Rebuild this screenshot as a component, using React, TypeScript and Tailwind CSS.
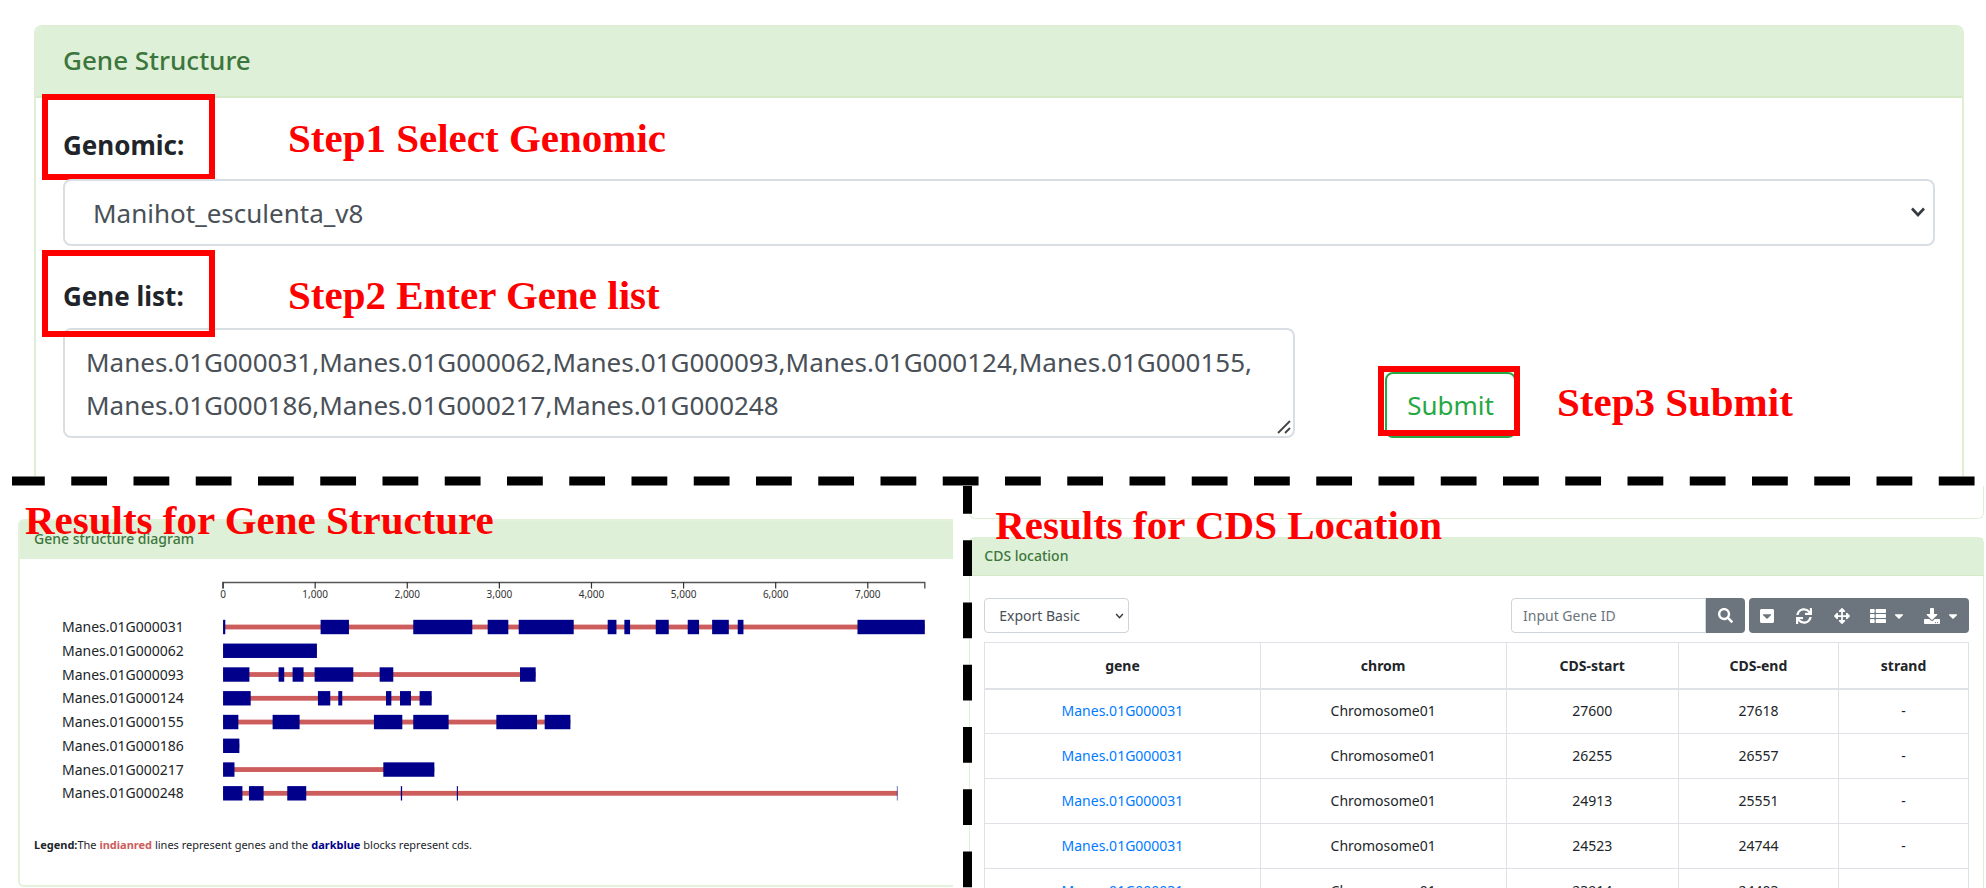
import { FaSearch, FaCaretSquareDown, FaSync, FaArrowsAlt, FaThList, FaDownload, FaCaretDown } from "react-icons/fa";

type Span = [number, number];

const genes: { id: string; cds: Span[] }[] = [
  {
    id: "Manes.01G000031",
    cds: [[0, 24], [1059, 1367], [2065, 2706], [2873, 3097], [3210, 3807], [4176, 4271], [4357, 4419], [4698, 4839], [5045, 5168], [5310, 5491], [5588, 5650], [6888, 7619]],
  },
  { id: "Manes.01G000062", cds: [[0, 1019]] },
  { id: "Manes.01G000093", cds: [[0, 286], [603, 664], [755, 874], [994, 1414], [1700, 1848], [3224, 3394]] },
  { id: "Manes.01G000124", cds: [[0, 300], [1030, 1164], [1251, 1294], [1769, 1827], [1921, 2040], [2134, 2265]] },
  { id: "Manes.01G000155", cds: [[0, 166], [538, 831], [1638, 1946], [2065, 2449], [2967, 3409], [3492, 3771]] },
  { id: "Manes.01G000186", cds: [[0, 177]] },
  { id: "Manes.01G000217", cds: [[0, 124], [1740, 2294]] },
  { id: "Manes.01G000248", cds: [[0, 210], [281, 440], [697, 903], [1930, 1944], [2538, 2550], [7316, 7322]] },
];

const cdsRows = [
  { gene: "Manes.01G000031", chrom: "Chromosome01", start: 27600, end: 27618, strand: "-" },
  { gene: "Manes.01G000031", chrom: "Chromosome01", start: 26255, end: 26557, strand: "-" },
  { gene: "Manes.01G000031", chrom: "Chromosome01", start: 24913, end: 25551, strand: "-" },
  { gene: "Manes.01G000031", chrom: "Chromosome01", start: 24523, end: 24744, strand: "-" },
  { gene: "Manes.01G000031", chrom: "Chromosome01", start: 23914, end: 24403, strand: "-" },
];

const AXIS_LEFT = 189;
const toX = (bp: number) => AXIS_LEFT + bp * 0.09208;

function Note({ className, children }: { className: string; children: string }) {
  return (
    <p className={`pointer-events-none absolute whitespace-nowrap font-['Liberation_Serif',serif] text-[41px] leading-[48px] font-bold text-[#ff0000] ${className}`}>
      {children}
    </p>
  );
}

function Frame({ className }: { className: string }) {
  return <span aria-hidden="true" className={`pointer-events-none absolute border-6 border-[#ff0000] ${className}`} />;
}

function Chevron({ className }: { className: string }) {
  return (
    <svg aria-hidden="true" viewBox="0 0 16 10" className={`pointer-events-none absolute ${className}`}>
      <path d="M2 1.5 L8 8 L14 1.5" fill="none" stroke="#343a40" strokeWidth="2.6" />
    </svg>
  );
}

function GeneChart() {
  return (
    <svg viewBox="0 0 919 240" className="block w-full font-['Noto_Sans',sans-serif]" role="img" aria-label="Gene structure diagram">
      <path d={`M${AXIS_LEFT} 13.5 V7.5 H${toX(7619)} V13.5`} fill="none" stroke="#55565a" strokeWidth="1.4" />
      {[0, 1000, 2000, 3000, 4000, 5000, 6000, 7000].map((tick) => (
        <g key={tick}>
          <path d={`M${toX(tick)} 7 V13.5`} stroke="#333" strokeWidth="1.2" />
          <text x={toX(tick)} y={23} textAnchor="middle" fontSize="10" fill="#333">
            {tick.toLocaleString("en-US")}
          </text>
        </g>
      ))}
      {genes.map((gene, row) => {
        const y = 52 + row * 23.75;
        return (
          <g key={gene.id}>
            <text x="28" y={y + 5} fontSize="14" fill="#212529">
              {gene.id}
            </text>
            <rect x={toX(0)} y={y - 2.4} width={toX(gene.cds[gene.cds.length - 1][1]) - toX(0)} height="4.8" fill="indianred" />
            {gene.cds.map(([start, end]) => (
              <rect key={start} x={toX(start)} y={y - 7.2} width={toX(end) - toX(start)} height="14.4" fill="darkblue" />
            ))}
          </g>
        );
      })}
    </svg>
  );
}

function ToolButton({ label, className, children }: { label: string; className: string; children: React.ReactNode }) {
  return (
    <button type="button" aria-label={label} className={`flex h-full items-center justify-center gap-[6px] ${className}`}>
      {children}
    </button>
  );
}

export default function App() {
  return (
    <main className="flex h-screen flex-col overflow-hidden bg-white font-['Noto_Sans',sans-serif] text-[#212529]">
      <section className="relative shrink-0 pt-[25px] pr-[22px] pl-[34px]">
        <div className="rounded-t-lg border-2 border-b-0 border-[#dfefd6]">
          <h2 className="rounded-t-md border-b-2 border-[#d6e9c6] bg-[#dff0d8] px-[27px] pt-[11px] pb-[14px] text-[26px] leading-[44px] font-medium text-[#3c763d]">
            Gene Structure
          </h2>
          <form className="px-[27px]" onSubmit={(e) => e.preventDefault()}>
            <div className="relative pt-[25px]">
              <label htmlFor="genomic" className="block pb-[12px] text-[26px] leading-[44px] font-bold">
                Genomic:
              </label>
              <Frame className="top-[-4px] left-[-21px] h-[86px] w-[173px]" />
              <Note className="top-[16px] left-[225px]">Step1 Select Genomic</Note>
            </div>
            <div className="relative">
              <select id="genomic" className="block h-[67px] w-full appearance-none rounded-lg border-2 border-[#d8dee4] bg-white pt-[2px] pl-7 text-[26px] text-[#495057]">
                <option>Manihot_esculenta_v8</option>
              </select>
              <Chevron className="top-[28px] right-[9px] h-[10px] w-[16px]" />
            </div>
            <div className="relative pt-[28px]">
              <label htmlFor="genes" className="block pb-[10px] text-[26px] leading-[44px] font-bold">
                Gene list:
              </label>
              <Frame className="top-[4px] left-[-21px] z-10 h-[87px] w-[173px]" />
              <Note className="top-[25px] left-[225px]">Step2 Enter Gene list</Note>
            </div>
            <div className="flex items-end pb-[38px]">
              <div className="relative w-[1232px]">
                <textarea
                  id="genes"
                  rows={2}
                  className="block h-[110px] w-full resize-none overflow-hidden rounded-lg border-2 border-[#d8dee4] py-[11px] pl-[21px] text-[26px] leading-[43px] text-[#495057]"
                  defaultValue={"Manes.01G000031,Manes.01G000062,Manes.01G000093,Manes.01G000124,Manes.01G000155,\nManes.01G000186,Manes.01G000217,Manes.01G000248"}
                />
                <svg aria-hidden="true" viewBox="0 0 14 14" className="pointer-events-none absolute right-[4px] bottom-[4px] h-[14px] w-[14px]">
                  <path d="M1 13 L13 1 M8 13 L13 8" stroke="#444" strokeWidth="1.8" />
                </svg>
              </div>
              <div className="relative ml-[90px]">
                <button type="submit" className="block h-[66px] w-[131px] rounded-lg border-2 border-[#28a745] bg-white text-[26px] text-[#28a745]">
                  Submit
                </button>
                <Frame className="top-[-6px] left-[-7px] h-[70px] w-[142px]" />
                <Note className="top-[6px] left-[172px]">Step3 Submit</Note>
              </div>
            </div>
          </form>
        </div>
      </section>

      <svg aria-hidden="true" className="block h-[10px] w-full shrink-0">
        <line x1="12" y1="5" x2="99.5%" y2="5" stroke="#000" strokeWidth="9" strokeDasharray="35.8 26.45" strokeDashoffset="3" />
      </svg>

      <div className="flex min-h-0 flex-1">
        <section className="relative w-[48%] shrink-0 pt-[33px] pl-[18px]">
          <div className="rounded-l-md border-2 border-r-0 border-[#e4f2dc]">
            <h2 className="border-b border-[#dff0d8] bg-[#dff0d8] px-[14px] pt-[6px] pb-[7px] text-[14px] leading-[24px] font-medium text-[#3c763d]">
              Gene structure diagram
            </h2>
            <div className="pt-[16px] pl-[14px]">
              <GeneChart />
              <p className="pt-[20px] pb-[30px] text-[11px] leading-[20px]">
                <b>Legend:</b>The <b className="text-[indianred]">indianred</b> lines represent genes and the <b className="text-[darkblue]">darkblue</b> blocks represent cds.
              </p>
            </div>
          </div>
          <Note className="top-[10px] left-[25px]">Results for Gene Structure</Note>
        </section>

        <div className="relative z-10 w-[32px] shrink-0 pl-[10px]">
          <svg aria-hidden="true" className="block h-full w-[9px]">
            <line x1="50%" y1="0" x2="50%" y2="100%" stroke="#000" strokeWidth="9" strokeDasharray="35.8 26.45" strokeDashoffset="8" />
          </svg>
        </div>

        <section className="relative -ml-[16px] min-w-0 flex-1 pr-[2px]">
          <div className="h-[33px] rounded-b-md border border-t-0 border-[#dff0d8]" />
          <div className="mt-[18px] rounded-t-md border border-[#dff0d8]">
            <h2 className="border-b border-[#d6e9c6] bg-[#dff0d8] px-[14px] pt-[6px] pb-[7px] text-[14px] leading-[24px] font-medium text-[#3c763d]">
              CDS location
            </h2>
            <div className="px-[14px] pt-[22px]">
              <div className="flex items-center">
                <div className="relative">
                  <select aria-label="Export type" className="block h-[35px] w-[145px] appearance-none rounded-sm border border-[#ced4da] bg-white pl-[14px] text-[14px] text-[#495057]">
                    <option>Export Basic</option>
                  </select>
                  <Chevron className="top-[15px] right-[5px] h-[6px] w-[9px]" />
                </div>
                <input aria-label="Gene ID" placeholder="Input Gene ID" className="ml-auto h-[35px] w-[195px] rounded-l-sm border border-[#ced4da] pl-[11px] text-[14px] placeholder:text-[#6c757d]" />
                <button type="button" aria-label="Search" className="flex h-[35px] w-[39px] items-center justify-center rounded-r-sm bg-[#6c757d] text-white">
                  <FaSearch size={15} />
                </button>
                <div className="ml-[4px] flex h-[35px] w-[220px] rounded-sm bg-[#6c757d] text-white">
                  <ToolButton label="Toggle view" className="w-[36px]"><FaCaretSquareDown size={16} /></ToolButton>
                  <ToolButton label="Refresh" className="w-[37px]"><FaSync size={16} /></ToolButton>
                  <ToolButton label="Fullscreen" className="w-[39px]"><FaArrowsAlt size={16} /></ToolButton>
                  <ToolButton label="Columns" className="w-[54px]"><FaThList size={16} /><FaCaretDown size={14} /></ToolButton>
                  <ToolButton label="Export data" className="w-[54px]"><FaDownload size={16} /><FaCaretDown size={14} /></ToolButton>
                </div>
              </div>
              <table className="mt-[9px] w-full table-fixed border-collapse border border-[#dee2e6] text-center text-[14px] leading-[21px]">
                <colgroup>
                  <col className="w-[28%]" />
                  <col className="w-[25%]" />
                  <col className="w-[17.5%]" />
                  <col className="w-[16.3%]" />
                  <col className="w-[13.2%]" />
                </colgroup>
                <thead>
                  <tr className="h-[46px] border-b-2 border-[#dee2e6]">
                    {["gene", "chrom", "CDS-start", "CDS-end", "strand"].map((name) => (
                      <th key={name} className="border-x border-[#dee2e6] font-bold">{name}</th>
                    ))}
                  </tr>
                </thead>
                <tbody>
                  {cdsRows.map((row) => (
                    <tr key={row.start} className="h-[45px]">
                      <td className="border border-[#dee2e6] pb-[2px]"><a href={`#${row.gene}`} className="text-[#007bff]">{row.gene}</a></td>
                      <td className="border border-[#dee2e6] pb-[2px]">{row.chrom}</td>
                      <td className="border border-[#dee2e6] pb-[2px]">{row.start}</td>
                      <td className="border border-[#dee2e6] pb-[2px]">{row.end}</td>
                      <td className="border border-[#dee2e6] pb-[2px]">{row.strand}</td>
                    </tr>
                  ))}
                </tbody>
              </table>
            </div>
          </div>
          <Note className="top-[15px] left-[26px]">Results for CDS Location</Note>
        </section>
      </div>
    </main>
  );
}
